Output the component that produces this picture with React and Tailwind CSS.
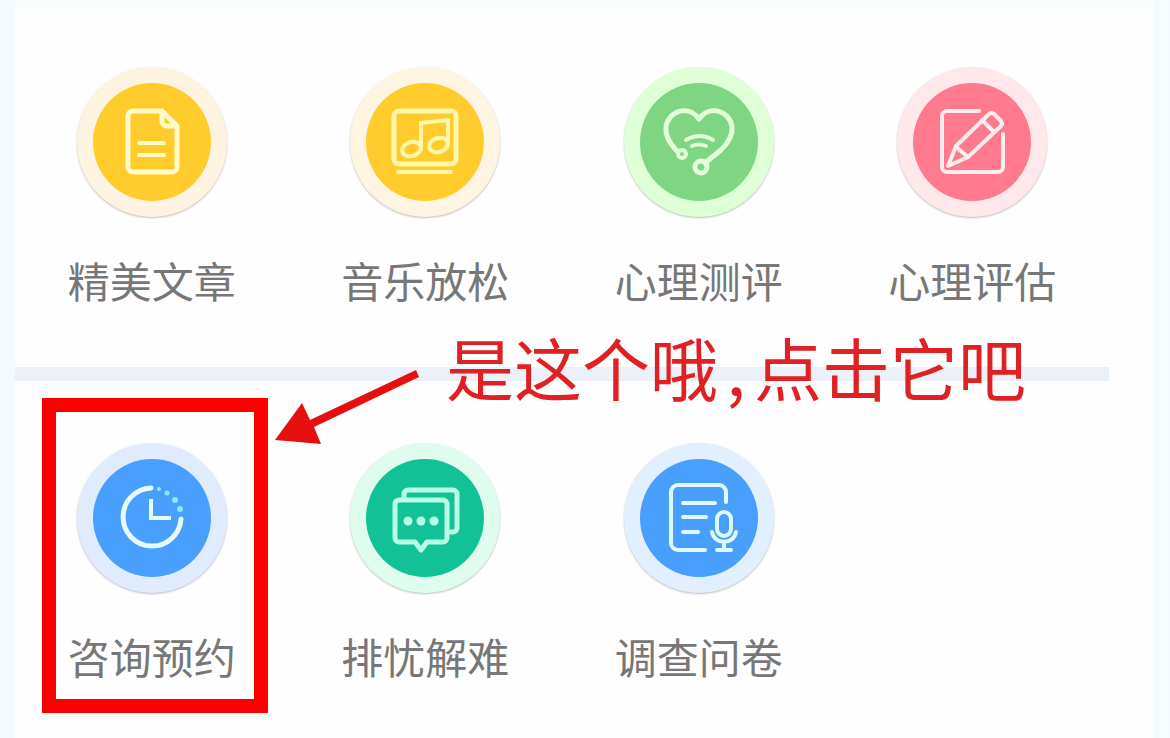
const line = {
  fill: "none",
  strokeWidth: 4,
  strokeLinecap: "round",
  strokeLinejoin: "round",
};

function ArticleIcon() {
  return (
    <svg viewBox="0 0 118 118" className="size-full" stroke="#fffbc4" {...line} strokeWidth="5">
      <path d="M67 28H40a5 5 0 0 0-5 5v51a5 5 0 0 0 5 5h39a5 5 0 0 0 5-5V43L69 28v10a5 5 0 0 0 5 5h10" />
      <path d="M46 60h25M46 72h25" strokeWidth="4" />
    </svg>
  );
}

function MusicIcon() {
  return (
    <svg viewBox="0 0 118 118" className="size-full" stroke="#fff7a8" {...line}>
      <rect x="28" y="28" width="62" height="53" rx="5" strokeWidth="5" />
      <path d="M32 89h53M55 65V40l27-3v22" />
      <ellipse cx="45.500" cy="66" rx="9.500" ry="7" transform="rotate(-15 45.500 66)" />
      <ellipse cx="72.500" cy="62" rx="9.500" ry="7" transform="rotate(-15 72.500 62)" />
    </svg>
  );
}

function HeartIcon() {
  return (
    <svg viewBox="0 0 118 118" className="size-full" stroke="#e2ffda" {...line} strokeWidth="5">
      <path d="M37 68C29 60 25 52 26 44c2-16 22-23 33-8 11-15 31-8 33 8 1 8-4 16-11 23L65 80" />
      <circle cx="42" cy="71" r="4" strokeWidth="4" />
      <circle cx="61" cy="84" r="6" />
      <path d="M46 57q14-8 27 0M52 63q7-3 14 0" strokeWidth="4" />
    </svg>
  );
}

function PencilIcon() {
  return (
    <svg viewBox="0 0 118 118" className="size-full" stroke="#ffecee" {...line}>
      <path d="M66 28H34a5 5 0 0 0-5 5v51a5 5 0 0 0 5 5h51a5 5 0 0 0 5-5V51" />
      <path d="m35 83 8-20 33-32q2-2 5 0l7 7q2 3 0 5L55 74Z" />
      <path d="m43 64 12 10M69 37l11 11" />
    </svg>
  );
}

function ClockIcon() {
  return (
    <svg viewBox="0 0 118 118" className="size-full" stroke="#e4fcff" {...line}>
      <path d="M58 29a29 29 0 1 0 30 31" strokeWidth="5" />
      <path d="M58 42v17h18" strokeLinecap="square" strokeLinejoin="miter" />
      <g fill="#8fe6ff" stroke="none">
        <circle cx="66" cy="30" r="2" />
        <circle cx="74" cy="34" r="2.500" />
        <circle cx="82" cy="41" r="3" />
        <circle cx="87" cy="50" r="3" />
      </g>
    </svg>
  );
}

function ChatIcon() {
  return (
    <svg viewBox="0 0 118 118" className="size-full" stroke="#b5ffe6" {...line} strokeWidth="5">
      <path d="M38 39v-4a4 4 0 0 1 4-4h45a4 4 0 0 1 4 4v34a4 4 0 0 1-4 4h-4" />
      <path d="M33 41h44a4 4 0 0 1 4 4v34a4 4 0 0 1-4 4H61l-6 8-6-8H33a4 4 0 0 1-4-4V45a4 4 0 0 1 4-4Z" />
      <g fill="#b5ffe6" stroke="none">
        <circle cx="42" cy="62" r="4.500" />
        <circle cx="55" cy="62" r="4.500" />
        <circle cx="68" cy="62" r="4.500" />
      </g>
    </svg>
  );
}

function SurveyIcon() {
  return (
    <svg viewBox="0 0 118 118" className="size-full" stroke="#e0fbff" {...line}>
      <path d="M86 43V33a7 7 0 0 0-7-7H38a7 7 0 0 0-7 7v51a7 7 0 0 0 7 7h27" />
      <path d="M43 44h32M43 58h23M43 73h15" />
      <rect x="77" y="53" width="14" height="24" rx="7" />
      <path d="M72 73c2 13 22 13 24 0M84 83v8M77 91h14" />
    </svg>
  );
}

const topItems = [
  { label: "精美文章", icon: <ArticleIcon />, ring: "bg-[#fff4e2]", fill: "bg-[#ffcb2d]" },
  { label: "音乐放松", icon: <MusicIcon />, ring: "bg-[#fff5e2]", fill: "bg-[#ffcb2d]" },
  { label: "心理测评", icon: <HeartIcon />, ring: "bg-[#dfffd6]", fill: "bg-[#80d583]" },
  { label: "心理评估", icon: <PencilIcon />, ring: "bg-[#ffe8e9]", fill: "bg-[#ff7a8d]" },
];

const bottomItems = [
  { label: "咨询预约", icon: <ClockIcon />, ring: "bg-[#e0ecfd]", fill: "bg-[#489ffd]", marked: true },
  { label: "排忧解难", icon: <ChatIcon />, ring: "bg-[#dffcee]", fill: "bg-[#12c195]" },
  { label: "调查问卷", icon: <SurveyIcon />, ring: "bg-[#e2effe]", fill: "bg-[#489ffd]" },
];

function MenuItem({ item }) {
  return (
    <a href="#" className="relative flex flex-col items-center gap-8">
      <span
        className={`flex size-[150px] items-center justify-center rounded-full shadow-[0_1px_2px_rgba(0,0,0,0.25)] ${item.ring}`}
      >
        <span className={`size-[118px] rounded-full ${item.fill}`}>{item.icon}</span>
      </span>
      <span className="text-[42px] leading-[62px] whitespace-nowrap text-[#777777]">
        {item.label}
      </span>
      {item.marked && (
        <span className="absolute -top-[45px] -bottom-[26px] left-1/2 w-[226px] -translate-x-[110px] border-14 border-[#fb0000]" />
      )}
    </a>
  );
}

export default function App() {
  return (
    <div className="min-h-screen bg-[#f5fcff] pr-4 pl-[15px] font-['Noto_Sans_CJK_SC',sans-serif]">
      <main className="min-h-screen bg-[#fefefe] bg-linear-to-b from-[#f8feff] to-[#fefefe] to-[16px] pr-[45px]">
        <nav className="grid grid-cols-4 pt-[67px] pb-14">
          {topItems.map((item) => (
            <MenuItem key={item.label} item={item} />
          ))}
        </nav>

        <div className="relative h-[14px] bg-[#ebf0f9]">
          <svg
            viewBox="0 0 146 76"
            className="absolute top-1 left-[260px] z-10 w-[146px] overflow-visible"
            fill="#e60f10"
          >
            <path d="M141 -1 144 6 39 56 46 73 0 69 27 32 35 49Z" />
          </svg>
          <p className="absolute -top-[50px] left-[431px] z-10 flex text-[68px] leading-[100px] whitespace-nowrap text-[#e02023]">
            是这个哦<span className="w-9 text-center">,</span>点击它吧
          </p>
        </div>

        <nav className="grid grid-cols-4 pt-[62px] pb-12">
          {bottomItems.map((item) => (
            <MenuItem key={item.label} item={item} />
          ))}
        </nav>
      </main>
    </div>
  );
}
